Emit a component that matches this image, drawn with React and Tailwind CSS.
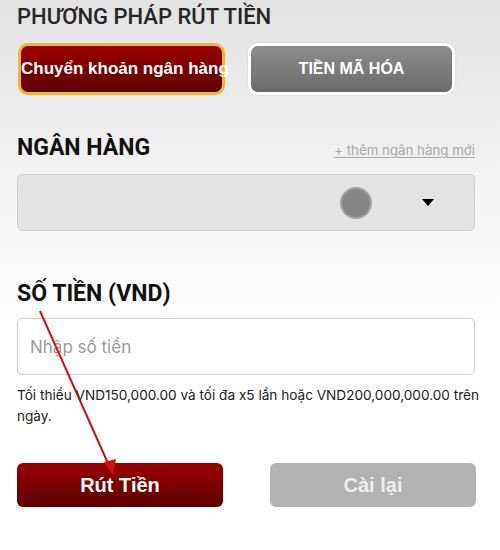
import React from "react";

const WithdrawForm = () => {
  return (
    <div className="relative w-[500px] h-[550px] overflow-hidden bg-[linear-gradient(to_bottom,#e3e3e3_0%,#efefef_25%,#fafafa_48%,#ffffff_60%)] px-[17px] font-['Liberation_Sans',Arial,sans-serif]">
      {/* Title */}
      <h1 className="pt-[4px] font-['Roboto',sans-serif] text-[22px] leading-[26px] font-medium text-[#262626]">
        PHƯƠNG PHÁP RÚT TIỀN
      </h1>

      {/* Method tabs */}
      <div className="mt-[13px] flex gap-[23px] pl-[1px]">
        <button
          type="button"
          className="flex h-[52px] w-[207px] items-center justify-start whitespace-nowrap rounded-[10px] border-[3px] border-[#f1b82f] bg-[linear-gradient(to_bottom,#9b0000,#5c0000)] text-[17px] font-bold text-white"
        >
          Chuyển khoản ngân hàng
        </button>
        <button
          type="button"
          className="flex h-[52px] w-[207px] items-center justify-center rounded-[10px] border-[3px] border-white bg-[linear-gradient(to_bottom,#8c8c8c,#6b6b6b)] text-[16px] font-bold text-white shadow-[0_0_2px_rgba(0,0,0,0.15)]"
        >
          TIỀN MÃ HÓA
        </button>
      </div>

      {/* Bank */}
      <div className="mt-[39px] flex w-[458px] items-baseline justify-between">
        <h2 className="font-['Roboto',sans-serif] text-[23px] leading-[28px] font-bold text-[#111]">NGÂN HÀNG</h2>
        <a href="#" className="font-['Inter',sans-serif] text-[13.3px] text-[#a8a8a8] underline underline-offset-2">
          + thêm ngân hàng mới
        </a>
      </div>
      <div className="mt-[12px] flex h-[57px] w-[458px] items-center rounded-[5px] border border-[#cfcfcf] bg-[#e4e4e4]">
        <div className="ml-auto h-[32px] w-[32px] rounded-full border-[2px] border-[#a2a2a2] bg-[#858585]" />
        <div className="ml-[50px] mr-[40px] h-0 w-0 border-x-[6px] border-t-[7px] border-x-transparent border-t-black" />
      </div>

      {/* Amount */}
      <h2 className="mt-[49px] font-['Roboto',sans-serif] text-[23px] leading-[28px] font-bold text-[#111]">SỐ TIỀN (VND)</h2>
      <input
        type="text"
        placeholder="Nhập số tiền"
        className="mt-[10px] h-[57px] w-[458px] rounded-[5px] border border-[#cfcfcf] bg-white px-[12px] font-['Inter',sans-serif] text-[17px] text-[#333] placeholder:text-[#9a9a9a] outline-none"
      />
      <p className="mt-[10px] -mr-[10px] font-['Inter',sans-serif] text-[13.6px] leading-[21px] text-[#222]">
        Tối thiểu VND150,000.00 và tối đa x5 lần hoặc VND200,000,000.00 trên ngày.
      </p>

      {/* Actions */}
      <div className="mt-[36px] flex w-[459px] justify-between">
        <button
          type="button"
          className="h-[44px] w-[206px] rounded-[6px] bg-[linear-gradient(to_bottom,#9b0000,#5c0000)] text-[20px] font-bold text-white"
        >
          Rút Tiền
        </button>
        <button
          type="button"
          className="h-[44px] w-[206px] rounded-[6px] bg-[#b2b2b2] text-[20px] font-bold text-[#eeeeee]"
        >
          Cài lại
        </button>
      </div>

      {/* Annotation arrow */}
      <svg className="pointer-events-none absolute left-0 top-0" width="500" height="550">
        <line x1="40" y1="311" x2="111" y2="470" stroke="#cc1111" strokeWidth="2" />
        <polygon points="113,475 104,462 116,459" fill="#cc1111" />
      </svg>
    </div>
  );
};

export default function App() {
  return <WithdrawForm />;
}
